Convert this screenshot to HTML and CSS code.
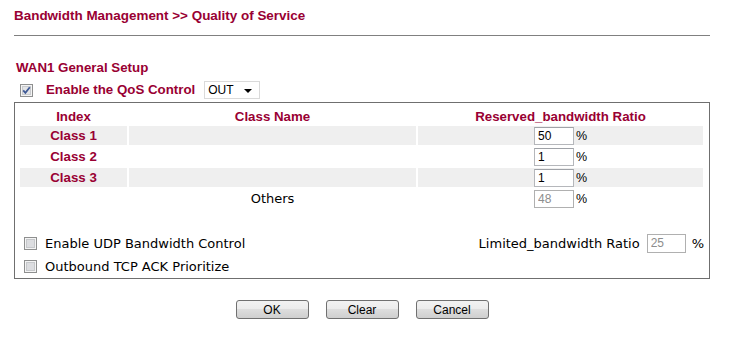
FILE: index.html
```html
<!DOCTYPE html>
<html lang="en">
<head>
    <meta charset="UTF-8">
    <meta name="viewport" content="width=device-width, initial-scale=1.0">
    <title>Bandwidth Management - Quality of Service</title>
    <link rel="stylesheet" href="styles.css">
</head>
<body>
    <div class="page">
        <div class="title">Bandwidth Management &gt;&gt; Quality of Service</div>
        <div class="rule"></div>

        <div class="section-head">WAN1 General Setup</div>
        <div class="qos-row">
            <span class="check">
                <svg width="13" height="13" viewBox="0 0 13 13">
                    <rect x="0.5" y="0.5" width="12" height="12" fill="#f4f4f4" stroke="#8e8f8f"/>
                    <rect x="2.5" y="2.5" width="8" height="8" fill="#e3e4e6" stroke="#c9cbce"/>
                    <path d="M3.2 6.3 L5.4 8.8 L9.8 3.2" fill="none" stroke="#3f5a96" stroke-width="1.8"/>
                </svg>
            </span>
            <span class="qos-label">Enable the QoS Control</span>
            <span class="select-wrap">
                <select class="direction">
                    <option>OUT</option>
                    <option>IN</option>
                    <option>BOTH</option>
                </select>
            </span>
        </div>

        <div class="box">
            <div class="classes">
                <div class="hd">Index</div>
                <div class="hd">Class Name</div>
                <div class="hd">Reserved_bandwidth Ratio</div>

                <div class="idx shade">Class 1</div>
                <div class="name shade"></div>
                <div class="ratio shade"><input class="pct" type="text" value="50"><span class="unit">%</span></div>

                <div class="idx">Class 2</div>
                <div class="name"></div>
                <div class="ratio"><input class="pct" type="text" value="1"><span class="unit">%</span></div>

                <div class="idx shade">Class 3</div>
                <div class="name shade"></div>
                <div class="ratio shade"><input class="pct" type="text" value="1"><span class="unit">%</span></div>

                <div class="idx"></div>
                <div class="name others">Others</div>
                <div class="ratio"><input class="pct" type="text" value="48" disabled><span class="unit">%</span></div>
            </div>

            <div class="opts">
                <div class="opt-row">
                    <span class="check">
                        <svg width="13" height="13" viewBox="0 0 13 13">
                            <rect x="0.5" y="0.5" width="12" height="12" fill="#f4f4f4" stroke="#8e8f8f"/>
                            <rect x="2.5" y="2.5" width="8" height="8" fill="#dcdde0" stroke="#c6c8cb"/>
                        </svg>
                    </span>
                    <span class="opt-label">Enable UDP Bandwidth Control</span>
                    <span class="limit">
                        <span>Limited_bandwidth Ratio</span>
                        <input class="limit-input" type="text" value="25" disabled>
                        <span class="limit-unit">%</span>
                    </span>
                </div>
                <div class="opt-row">
                    <span class="check">
                        <svg width="13" height="13" viewBox="0 0 13 13">
                            <rect x="0.5" y="0.5" width="12" height="12" fill="#f4f4f4" stroke="#8e8f8f"/>
                            <rect x="2.5" y="2.5" width="8" height="8" fill="#dcdde0" stroke="#c6c8cb"/>
                        </svg>
                    </span>
                    <span class="opt-label">Outbound TCP ACK Prioritize</span>
                </div>
            </div>
        </div>

        <div class="buttons">
            <button>OK</button>
            <button>Clear</button>
            <button>Cancel</button>
        </div>
    </div>
</body>
</html>
```

FILE: styles.css
```css
/* Page base */
body {
    margin: 0;
    background: #ffffff;
    color: #000;
    font-family: "DejaVu Sans", Verdana, sans-serif;
    font-size: 13px;
}

.page {
    width: 696px;
    margin-left: 14px;
}

/* Headings */
.title,
.section-head,
.qos-label,
.hd,
.idx {
    font-family: "Liberation Sans", Arial, sans-serif;
    font-weight: bold;
    font-size: 13.3px;
    line-height: 16px;
    color: #990033;
}

.title {
    padding-top: 8px;
    font-size: 13.45px;
}

.rule {
    margin-top: 11px;
    height: 1px;
    background: #808080;
}

.section-head {
    margin-top: 24px;
    padding-left: 2px;
}

/* QoS switch row */
.qos-row {
    display: flex;
    align-items: center;
    height: 22px;
    margin-top: 3px;
}

.check {
    display: flex;
    width: 13px;
    height: 13px;
}

.qos-row .check {
    margin-left: 6px;
}

.qos-label {
    margin-left: 13px;
}

.select-wrap {
    position: relative;
    margin-left: 9px;
    display: flex;
}

.direction {
    appearance: none;
    -webkit-appearance: none;
    width: 56px;
    height: 18px;
    padding: 0 0 0 3px;
    border: 1px solid #dadada;
    border-radius: 0;
    background: #fff;
    font-family: "Liberation Sans", Arial, sans-serif;
    font-size: 12px;
    color: #000;
}

/* little arrow over the select */
.select-wrap::after {
    content: "";
    position: absolute;
    right: 8px;
    top: 8px;
    border-left: 4px solid transparent;
    border-right: 4px solid transparent;
    border-top: 4px solid #000;
}

/* Classes box */
.box {
    margin-top: 1px;
    border: 1px solid #6f6f6f;
    padding: 0 5px 1px;
}

.classes {
    display: grid;
    grid-template-columns: 107px 287px 285px;
    grid-template-rows: 21px repeat(4, 19px);
    gap: 2px;
}

.hd {
    padding-top: 6px;
    text-align: center;
}

.idx {
    text-align: center;
    line-height: 19px;
}

.shade {
    background: #efefef;
}

.others {
    text-align: center;
    line-height: 19px;
}

.ratio {
    display: flex;
    justify-content: center;
    align-items: center;
    gap: 2px;
}

.pct,
.limit-input {
    box-sizing: border-box;
    width: 40px;
    height: 18px;
    margin: 0;
    padding: 0 3px;
    border: 1px solid #b5b7bb;
    border-top-color: #9fa2a7;
    background: #fff;
    font-family: "Liberation Sans", Arial, sans-serif;
    font-size: 12px;
    color: #000;
}

.pct:disabled,
.limit-input:disabled {
    color: #8d8d8d;
    border-color: #b0b0b0;
    background: #fff;
}

.unit {
    font-family: "Liberation Sans", Arial, sans-serif;
    font-size: 12.5px;
    width: 11px;
}

/* Option rows */
.opts {
    margin-top: 24px;
    display: flex;
    flex-direction: column;
    gap: 1px;
}

.opt-row {
    display: flex;
    align-items: center;
    height: 22px;
}

.opt-row .check {
    margin-left: 4px;
}

.opt-label {
    margin-left: 8px;
}

.limit {
    margin-left: auto;
    display: flex;
    align-items: center;
}

.limit-input {
    width: 39px;
    height: 19px;
    margin-left: 7px;
}

.limit-unit {
    margin-left: 6px;
}

/* Buttons */
.buttons {
    display: flex;
    justify-content: center;
    gap: 17px;
    margin-top: 21px;
}

button {
    width: 73px;
    height: 19px;
    padding: 0;
    border: 1px solid #707070;
    border-radius: 3px;
    background: linear-gradient(#f2f2f2 0%, #ebebeb 50%, #dddddd 50%, #cfcfcf 100%);
    font-family: "Liberation Sans", Arial, sans-serif;
    font-size: 12px;
    color: #000;
    cursor: pointer;
}

button:hover {
    background: linear-gradient(#eaf6fd 0%, #d9f0fc 50%, #bee6fd 50%, #a7d9f5 100%);
}
```
